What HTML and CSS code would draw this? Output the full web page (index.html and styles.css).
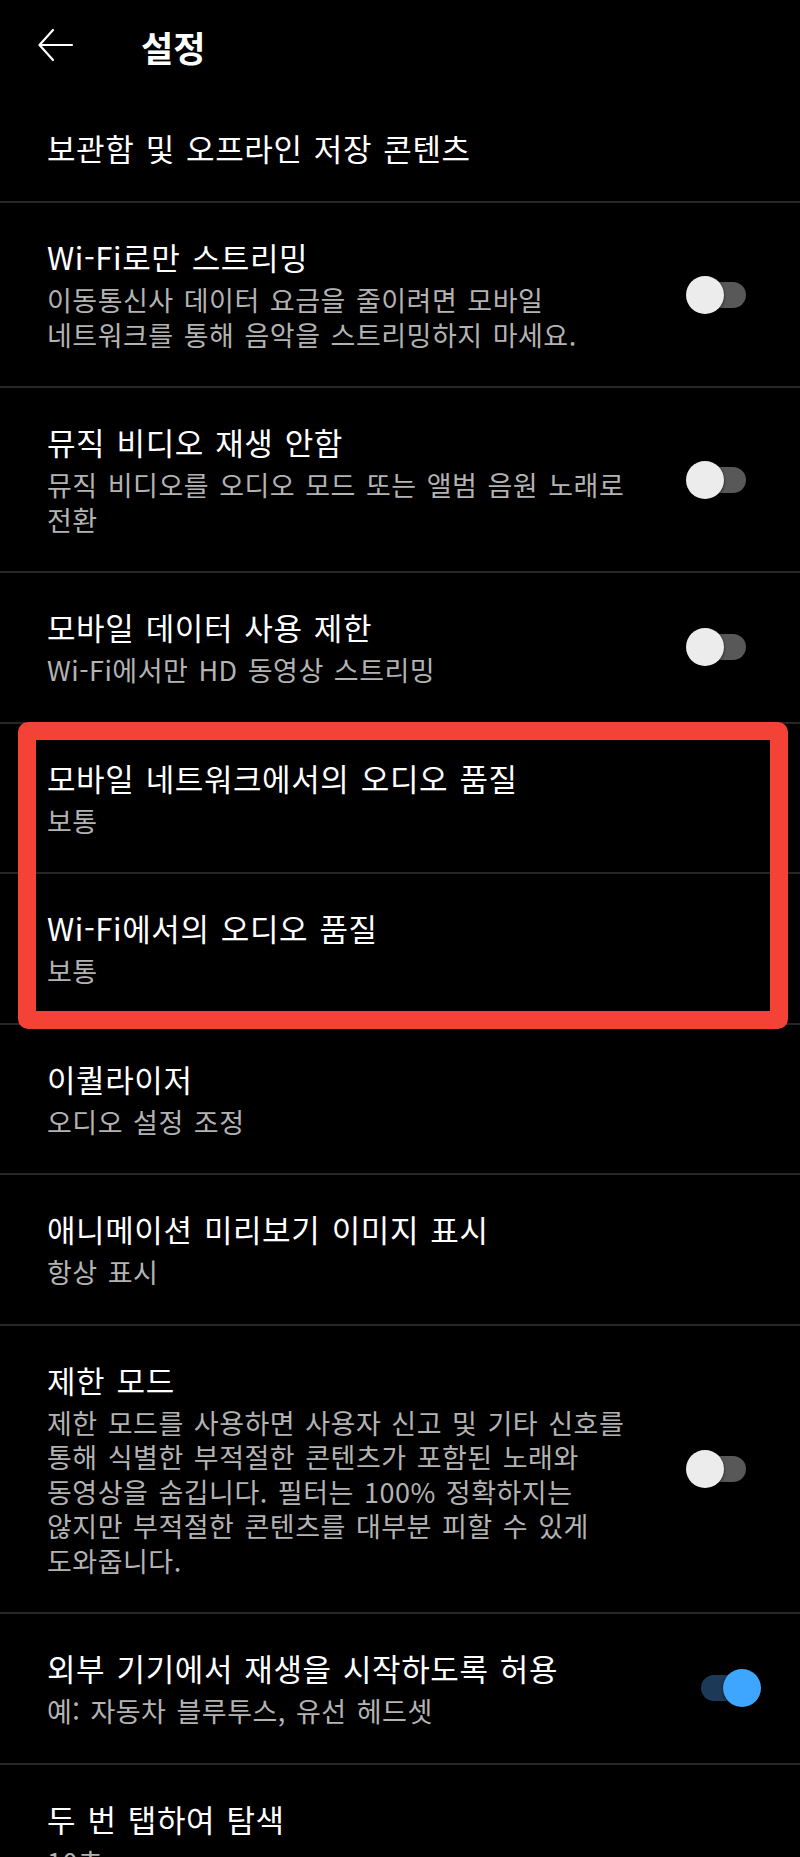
FILE: index.html
```html
<!DOCTYPE html>
<html lang="ko">
<head>
<meta charset="utf-8">
<title>설정</title>
<link rel="stylesheet" href="styles.css">
</head>
<body>
<div class="screen">
  <header class="appbar">
    <svg class="back" width="36" height="34" viewBox="0 0 36 34" aria-hidden="true">
      <path d="M15 2 L1.5 17 L15 32 M1.5 17 H34" fill="none" stroke="#fff" stroke-width="2.2" stroke-linecap="round" stroke-linejoin="round"/>
    </svg>
    <h1 class="appbar-title">설정</h1>
  </header>

  <div class="settings">
    <div class="item item-solo">
      <div class="text"><div class="title">보관함 및 오프라인 저장 콘텐츠</div></div>
    </div>

    <div class="item">
      <div class="text">
        <div class="title">Wi-Fi로만 스트리밍</div>
        <div class="sub">이동통신사 데이터 요금을 줄이려면 모바일 네트워크를 통해 음악을 스트리밍하지 마세요.</div>
      </div>
      <div class="toggle"><span class="track"></span><span class="knob"></span></div>
    </div>

    <div class="item">
      <div class="text">
        <div class="title">뮤직 비디오 재생 안함</div>
        <div class="sub">뮤직 비디오를 오디오 모드 또는 앨범 음원 노래로 전환</div>
      </div>
      <div class="toggle"><span class="track"></span><span class="knob"></span></div>
    </div>

    <div class="item">
      <div class="text">
        <div class="title">모바일 데이터 사용 제한</div>
        <div class="sub">Wi-Fi에서만 HD 동영상 스트리밍</div>
      </div>
      <div class="toggle"><span class="track"></span><span class="knob"></span></div>
    </div>

    <div class="highlight-group">
      <div class="item">
        <div class="text">
          <div class="title">모바일 네트워크에서의 오디오 품질</div>
          <div class="sub">보통</div>
        </div>
      </div>
      <div class="item">
        <div class="text">
          <div class="title">Wi-Fi에서의 오디오 품질</div>
          <div class="sub">보통</div>
        </div>
      </div>
      <div class="annotation"></div>
    </div>

    <div class="item">
      <div class="text">
        <div class="title">이퀄라이저</div>
        <div class="sub">오디오 설정 조정</div>
      </div>
    </div>

    <div class="item">
      <div class="text">
        <div class="title">애니메이션 미리보기 이미지 표시</div>
        <div class="sub">항상 표시</div>
      </div>
    </div>

    <div class="item">
      <div class="text">
        <div class="title">제한 모드</div>
        <div class="sub">제한 모드를 사용하면 사용자 신고 및 기타 신호를 통해 식별한 부적절한 콘텐츠가 포함된 노래와 동영상을 숨깁니다. 필터는 100% 정확하지는 않지만 부적절한 콘텐츠를 대부분 피할 수 있게 도와줍니다.</div>
      </div>
      <div class="toggle"><span class="track"></span><span class="knob"></span></div>
    </div>

    <div class="item">
      <div class="text">
        <div class="title">외부 기기에서 재생을 시작하도록 허용</div>
        <div class="sub">예: 자동차 블루투스, 유선 헤드셋</div>
      </div>
      <div class="toggle toggle-on"><span class="track"></span><span class="knob"></span></div>
    </div>

    <div class="item">
      <div class="text">
        <div class="title">두 번 탭하여 탐색</div>
        <div class="sub">10초</div>
      </div>
    </div>
  </div>
</div>
</body>
</html>
```

FILE: styles.css
```css
html, body {
  margin: 0;
  padding: 0;
  background: #000;
}

body {
  font-family: "Noto Sans CJK KR", "Noto Sans", sans-serif;
  color: #fff;
}

.screen {
  width: 800px;
  height: 1857px;
  overflow: hidden;
  background: #000;
}

.appbar {
  height: 94px;
  display: flex;
  align-items: center;
  padding-left: 38px;
  box-sizing: border-box;
}

.back {
  display: block;
  flex: none;
  margin-top: -4px;
}

.appbar-title {
  margin: 0 0 0 67px;
  font-size: 35px;
  font-weight: 700;
  line-height: 40px;
  color: #fff;
}

.settings {
  display: flex;
  flex-direction: column;
}

.item {
  display: flex;
  align-items: center;
  padding: 34px 36px 34px 47px;
  border-bottom: 2px solid #262626;
}

.item-solo {
  padding-bottom: 33px;
}

.text {
  flex: 1;
  min-width: 0;
  word-break: keep-all;
}

.title {
  font-size: 31px;
  line-height: 40px;
  font-weight: 400;
  color: #fff;
  letter-spacing: 0.6px;
  word-spacing: 2px;
}

.sub {
  margin-top: 6px;
  font-size: 27px;
  line-height: 34.5px;
  color: #b3b3b3;
  letter-spacing: 0.5px;
  word-spacing: 2px;
}

.toggle {
  position: relative;
  flex: none;
  width: 80px;
  height: 40px;
  margin-left: 27px;
}

.toggle .track {
  position: absolute;
  left: 8px;
  top: 7px;
  width: 54px;
  height: 26px;
  border-radius: 13px;
  background: #585858;
}

.toggle .knob {
  position: absolute;
  left: 2px;
  top: 1px;
  width: 38px;
  height: 38px;
  border-radius: 50%;
  background: #ececec;
  box-shadow: 0 1px 3px rgba(0, 0, 0, 0.7);
}

.toggle-on .track {
  left: 17px;
  background: #1c3a57;
}

.toggle-on .knob {
  left: 39px;
  background: #3ea6ff;
}

.highlight-group {
  position: relative;
}

.annotation {
  position: absolute;
  top: -2px;
  bottom: -4px;
  left: 18px;
  right: 12px;
  border: 18px solid #f44336;
  border-radius: 10px;
  pointer-events: none;
}
```
